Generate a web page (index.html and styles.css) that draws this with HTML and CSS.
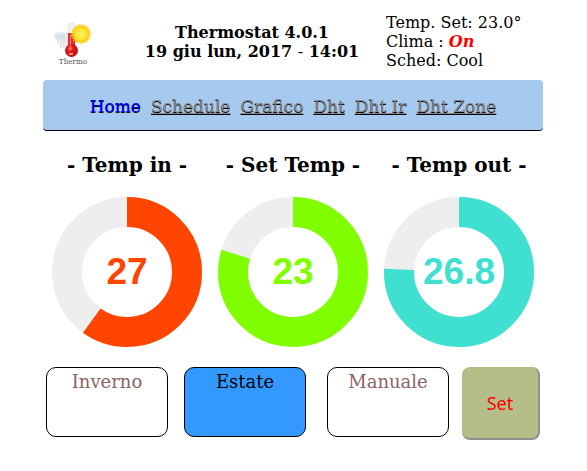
FILE: index.html
```html
<!DOCTYPE html>
<html lang="it">
<head>
<meta charset="utf-8">
<title>Thermostat 4.0.1</title>
<meta name="viewport" content="width=device-width, initial-scale=1">
<link rel="stylesheet" href="styles.css">
</head>
<body>
<header class="header">
  <div class="logo">
    <svg class="logo-mark" viewBox="0 0 40 36" aria-hidden="true">
      <defs>
        <radialGradient id="sun"><stop offset="0" stop-color="#fff36a"/><stop offset=".6" stop-color="#ffe62e"/><stop offset="1" stop-color="#f8c40c"/></radialGradient>
        <radialGradient id="bulb" cx=".4" cy=".35"><stop offset="0" stop-color="#ff8a80"/><stop offset=".45" stop-color="#e21b1b"/><stop offset="1" stop-color="#c80c0c"/></radialGradient>
      </defs>
      <path d="M1 12l3-2 2 1 3-2 3 2 3-1v7l-1 12-2-9-1 8-2-9-1 9-2-11-1 5-1-6-2 3z" fill="#e6ebf0"/>
      <path d="M5 12v10M8 11v15M11 12v14M2 13l11 3M3 17l9-5" stroke="#cdd6df" stroke-width=".7" fill="none"/>
      <rect x="15" y="1" width="7" height="28" rx="3.500" fill="#f1f2f6" stroke="#d8dae2" stroke-width=".6"/>
      <path d="M15 11h7v17h-7z" fill="#ee2a2a"/>
      <circle cx="18.500" cy="28.500" r="6.500" fill="url(#bulb)"/>
      <path d="M17.500 12v14" stroke="#ff7a70"/>
      <ellipse cx="18" cy="32" rx="2.500" ry="1" fill="#ff9d96"/>
      <circle cx="28" cy="12" r="9.200" fill="none" stroke="#fdd94a" stroke-width="2" stroke-dasharray="1.200 1.200"/>
      <circle cx="28" cy="12" r="8.700" fill="url(#sun)"/>
    </svg>
    <span class="logo-text">Thermo</span>
  </div>
  <h1 class="title">Thermostat 4.0.1<br>19 giu lun, 2017 <span class="dash">-</span> 14:01</h1>
  <p class="status">Temp. Set: 23.0°<br>Clima : <em class="on">On</em><br>Sched: Cool</p>
</header>
<nav class="nav">
  <a class="nav-link current" href="#" aria-current="page">Home</a>
  <a class="nav-link" href="#">Schedule</a>
  <a class="nav-link" href="#">Grafico</a>
  <a class="nav-link" href="#">Dht</a>
  <a class="nav-link" href="#">Dht Ir</a>
  <a class="nav-link" href="#">Dht Zone</a>
</nav>
<main>
  <div class="gauges">
    <section class="gauge temp-in">
      <h2 class="gauge-title">- Temp in -</h2>
      <div class="dial">
        <svg class="ring" viewBox="0 0 150 150" aria-hidden="true"><circle class="track" cx="75" cy="75" r="60"/><circle class="value" cx="75" cy="75" r="60" pathLength="1000" stroke-dasharray="600 1000"/></svg>
        <span class="reading">27</span>
      </div>
    </section>
    <section class="gauge set-temp">
      <h2 class="gauge-title">- Set Temp -</h2>
      <div class="dial">
        <svg class="ring" viewBox="0 0 150 150" aria-hidden="true"><circle class="track" cx="75" cy="75" r="60"/><circle class="value" cx="75" cy="75" r="60" pathLength="1000" stroke-dasharray="798 1000"/></svg>
        <span class="reading">23</span>
      </div>
    </section>
    <section class="gauge temp-out">
      <h2 class="gauge-title">- Temp out -</h2>
      <div class="dial">
        <svg class="ring" viewBox="0 0 150 150" aria-hidden="true"><circle class="track" cx="75" cy="75" r="60"/><circle class="value" cx="75" cy="75" r="60" pathLength="1000" stroke-dasharray="757 1000"/></svg>
        <span class="reading">26.8</span>
      </div>
    </section>
  </div>
  <div class="modes">
    <button class="mode" type="button">Inverno</button>
    <button class="mode active" type="button">Estate</button>
    <button class="mode manual" type="button">Manuale</button>
    <button class="set" type="button">Set</button>
  </div>
</main>
</body>
</html>
```
FILE: styles.css
```css
* {
  box-sizing: border-box;
}

body {
  margin: 0;
  padding: 0 44px 0 43px;
  background: #fff;
  color: #000;
  font-family: "DejaVu Serif", serif;
  font-size: 16px;
  line-height: 19px;
}

h1, h2, p {
  margin: 0;
}

.header {
  display: grid;
  grid-template-columns: 60px 1fr 157px;
  align-items: center;
  height: 80px;
  padding-top: 3px;
}

.logo {
  display: flex;
  flex-direction: column;
  align-items: center;
  padding-top: 4px;
}

.logo-mark {
  width: 40px;
  height: 36px;
}

.logo-text {
  color: #555;
  font-family: "DejaVu Serif Condensed", "DejaVu Serif", serif;
  font-size: 8px;
  line-height: 8px;
}

.title {
  padding-left: 15px;
  font-size: 16px;
  line-height: 19px;
  text-align: center;
}

.dash {
  font-weight: normal;
}

.on {
  color: red;
  font-weight: bold;
}

.nav {
  display: flex;
  justify-content: center;
  gap: 10px;
  padding: 17px 0 14px;
  border-bottom: 1px solid #000;
  border-radius: 4px;
  background: #a6c9f0;
  font-size: 17px;
}

.nav-link {
  color: #888;
  text-shadow: 0 1px 0 #000;
}

.current {
  color: #00f;
  text-decoration: none;
}

.gauges {
  display: grid;
  grid-template-columns: repeat(3, 1fr);
  padding: 23px 1px 20px;
}

.gauge {
  display: flex;
  flex-direction: column;
  align-items: center;
  gap: 21px;
}

.gauge-title {
  font-size: 20px;
  line-height: 22px;
}

.dial {
  display: grid;
  place-items: center;
  width: 150px;
  height: 150px;
}

.ring,
.reading {
  grid-area: 1 / 1;
}

.ring {
  width: 100%;
  height: 100%;
  fill: none;
  stroke-width: 30px;
  transform: rotate(-90deg);
}

.track {
  stroke: #eee;
}

.value {
  stroke: currentColor;
}

.temp-in .dial {
  color: #ff4500;
}

.set-temp .dial {
  color: #7fff00;
}

.temp-out .dial {
  color: #40e0d0;
}

.reading {
  font-family: "Liberation Sans", sans-serif;
  font-size: 37px;
  font-weight: bold;
  line-height: 42px;
}

.modes {
  display: flex;
  align-items: flex-start;
  gap: 16px;
  padding: 0 3px;
}

.mode {
  display: flex;
  flex: 120 1 0;
  justify-content: center;
  height: 70px;
  padding: 3px 0;
  border: 1px solid #000;
  border-radius: 10px;
  background: #fff;
  color: #8b6464;
  font: 18px/22px "DejaVu Serif", serif;
}

.active {
  background: #39f;
  color: #000;
}

.manual {
  margin: 0 -3px 0 5px;
}

.set {
  flex: 76 1 0;
  height: 73px;
  padding: 0;
  border: 0 solid #8f8f8f;
  border-width: 0 2px 2px 0;
  border-radius: 8px;
  background: #b5bd89;
  color: red;
  font: 18px/20px "Noto Sans", sans-serif;
}
```
